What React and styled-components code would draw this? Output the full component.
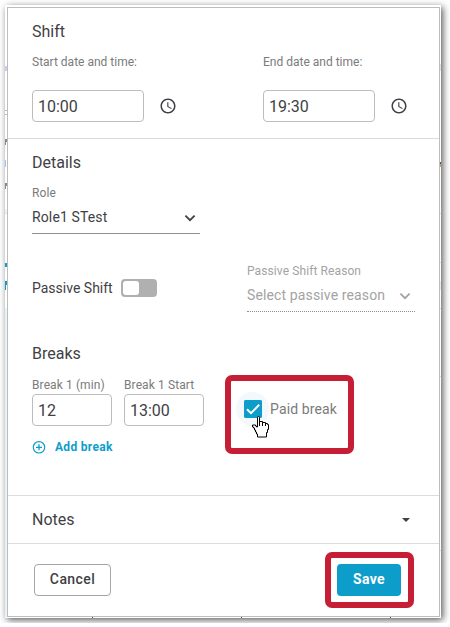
import { useState } from 'react';
import styled, { createGlobalStyle, css } from 'styled-components';

const COLORS = {
  Text: '#3f3f46',
  Label: '#7b7b7b',
  Muted: '#a3a3a3',
  Border: '#bdbdbd',
  Divider: '#dcdcdc',
  Primary: '#0d9dcb',
  Highlight: '#c61f35',
};

// slivers of the schedule that show on both sides of the dialog
const LEFT_MARKS = [
  { top: 61, height: 5, color: '#c9cdf3' },
  { top: 105, height: 1, color: '#bdbdb5' },
  { top: 109, height: 1, color: '#bdbdb5' },
  { top: 134, height: 6, color: '#8f8580', dotted: true },
  { top: 155, height: 7, color: '#9cc8f7', narrow: true },
  { top: 178, height: 6, color: '#8f8580', dotted: true },
  { top: 204, height: 4, color: '#f1f1f1' },
  { top: 208, height: 1, color: '#e4e4e4' },
  { top: 258, height: 4, color: COLORS.Primary },
  { top: 276, height: 9, color: COLORS.Primary, dotted: true },
  { top: 303, height: 310, color: '#e6f3f8' },
];

const RIGHT_MARKS = [
  { top: 59, height: 7, color: '#d3e6f2' },
  { top: 157, height: 2, color: '#55556a' },
  { top: 159, height: 3, color: '#d8a052' },
  { top: 208, height: 1, color: '#dddddd' },
  { top: 257, height: 1, color: '#dddddd' },
  { top: 276, height: 9, color: '#e3ecf2' },
  { top: 303, height: 1, color: '#dddddd' },
  { top: 371, height: 1, color: '#dddddd' },
  { top: 545, height: 1, color: '#dddddd' },
];

function ClockIcon() {
  return (
    <svg width="18" height="18" viewBox="0 0 24 24" fill="currentColor">
      <path d="M11.99 2C6.47 2 2 6.48 2 12s4.47 10 9.99 10C17.52 22 22 17.52 22 12S17.52 2 11.99 2zM12 20c-4.42 0-8-3.58-8-8s3.58-8 8-8 8 3.58 8 8-3.58 8-8 8zm.5-13H11v6l5.25 3.15.75-1.23-4.5-2.67z" />
    </svg>
  );
}

function ChevronIcon() {
  return (
    <svg width="20" height="20" viewBox="0 0 20 20" fill="none">
      <path d="M5.4 8.600l4.600 4.600L14.600 8.600" stroke="currentColor" strokeWidth="1.8" />
    </svg>
  );
}

function PlusCircleIcon() {
  return (
    <svg width="14" height="14" viewBox="0 0 14 14" fill="none" stroke="currentColor">
      <circle cx="7" cy="7.3" r="5.7" strokeWidth="1.2" />
      <path d="M7 4.3v6M4 7.3h6" strokeWidth="1.3" />
    </svg>
  );
}

function HandCursor() {
  return (
    <Cursor width="18" height="23" viewBox="0 0 18 23">
      <path
        d="M5.5 1.5q0-1 1-1t1 1v4h3v1h3v1h2v1h1v5h-1v3h-1v4.500H5.500v-3h-1v-2h-1v-2h-1v-2h-1v-1h-1v-2h3v1h1v1h1z"
        fill="#fff"
        stroke="#000"
      />
      <path d="M7.5 5v5M10.5 6v4M13.5 7v3" stroke="#000" fill="none" />
    </Cursor>
  );
}

function TimeField({ label, value }) {
  return (
    <div>
      <Label>{label}</Label>
      <TimeRow>
        <Input $width={112} defaultValue={value} />
        <ClockIcon />
      </TimeRow>
    </div>
  );
}

function SelectField({ label, value, disabled }) {
  return (
    <Select>
      <Label $muted={disabled} $spacing={0.1}>
        {label}
      </Label>
      <SelectValue $disabled={disabled}>
        <span>{value}</span>
        <ChevronIcon />
      </SelectValue>
    </Select>
  );
}

function App() {
  const [paid, setPaid] = useState(true);

  return (
    <Backdrop>
      <GlobalStyle />
      {LEFT_MARKS.map((mark, i) => (
        <Mark key={i} $side="left" {...markProps(mark)} />
      ))}
      {RIGHT_MARKS.map((mark, i) => (
        <Mark key={i} $side="right" {...markProps(mark)} />
      ))}
      <Tick $left={87} />
      <Tick $left={236} />
      <Tick $left={385} />

      <Dialog>
        <ShiftSection>
          <Heading>Shift</Heading>
          <TimeFields>
            <TimeField label="Start date and time:" value="10:00" />
            <TimeField label="End date and time:" value="19:30" />
          </TimeFields>
        </ShiftSection>

        <DetailsSection>
          <Heading>Details</Heading>
          <RoleRow>
            <SelectField label="Role" value="Role1 STest" />
          </RoleRow>

          <PassiveRow>
            <ToggleLabel>
              Passive Shift
              <Toggle />
            </ToggleLabel>
            <SelectField label="Passive Shift Reason" value="Select passive reason" disabled />
          </PassiveRow>

          <Heading>Breaks</Heading>
          <BreakRow>
            <BreakField>
              <Label $spacing={0.1}>Break 1 (min)</Label>
              <Input $width={80} defaultValue="12" />
            </BreakField>
            <BreakField>
              <Label $spacing={0.1}>Break 1 Start</Label>
              <Input $width={80} defaultValue="13:00" />
            </BreakField>
            <PaidBreak>
              <Checkbox $checked={paid} onClick={() => setPaid(!paid)}>
                {paid && (
                  <svg width="18" height="18" viewBox="0 0 18 18" fill="none">
                    <path d="M3 9.200l4 4L15.200 4.800" stroke="#fff" strokeWidth="2" />
                  </svg>
                )}
                <HandCursor />
              </Checkbox>
              Paid break
              <PaidHighlight />
            </PaidBreak>
          </BreakRow>
          <AddBreak>
            <PlusCircleIcon />
            Add break
          </AddBreak>
        </DetailsSection>

        <NotesSection>
          <Heading>Notes</Heading>
          <Caret />
        </NotesSection>

        <Footer>
          <CancelButton>Cancel</CancelButton>
          <SaveButton>
            Save
            <SaveHighlight />
          </SaveButton>
        </Footer>
      </Dialog>
    </Backdrop>
  );
}

const markProps = (mark) => ({
  $top: mark.top,
  $height: mark.height,
  $color: mark.color,
  $narrow: mark.narrow,
  $dotted: mark.dotted,
});

const GlobalStyle = createGlobalStyle`
  *, *::before, *::after {
    box-sizing: border-box;
  }

  body {
    margin: 0;
    background: #fff;
    font-family: Roboto, "Liberation Sans", sans-serif;
    color: ${COLORS.Text};
    overflow: hidden;
  }

  button, input {
    font: inherit;
    color: inherit;
  }

  svg {
    display: block;
    flex-shrink: 0;
  }
`;

const Backdrop = styled.div`
  position: relative;
  width: 436px;
  height: 613px;
  margin: 5px;
  padding: 2px 1px 1px 2px;
  background: #fff;
  box-shadow: 2px 2px 7px rgba(0, 0, 0, 0.65);
`;

const Mark = styled.span`
  position: absolute;
  ${({ $side }) => $side}: 0;
  top: ${({ $top }) => $top}px;
  width: ${({ $narrow, $side }) => ($narrow || $side === 'right' ? 1 : 2)}px;
  height: ${({ $height }) => $height}px;
  background: ${({ $color }) => $color};

  ${({ $dotted, $color }) =>
    $dotted &&
    css`
      background: linear-gradient(to bottom right, ${$color} 60%, #fff 60%);
    `}
`;

const Tick = styled.span`
  position: absolute;
  left: ${({ $left }) => $left}px;
  bottom: 0;
  width: 1px;
  height: 1px;
  background: #555;
`;

const Dialog = styled.div`
  position: relative;
  width: 433px;
  height: 610px;
  display: flex;
  flex-direction: column;
  background: #fff;
  border: 1px solid ${COLORS.Border};
`;

const ShiftSection = styled.section`
  height: 131px;
  padding: 14px 24px 0;
  border-bottom: 1px solid ${COLORS.Divider};
`;

const DetailsSection = styled.section`
  height: 357px;
  padding: 14px 24px 0;
  border-bottom: 1px solid ${COLORS.Divider};
`;

const Heading = styled.h2`
  margin: 0;
  font-size: 16px;
  font-weight: 400;
  line-height: 20px;
`;

const Label = styled.label`
  display: block;
  font-size: 12px;
  line-height: 16px;
  letter-spacing: ${({ $spacing = 0 }) => $spacing}px;
  color: ${({ $muted }) => ($muted ? COLORS.Muted : COLORS.Label)};
`;

const Input = styled.input`
  display: block;
  width: ${({ $width }) => $width}px;
  height: 32px;
  padding: 0 5px;
  border: 1px solid ${COLORS.Border};
  border-radius: 4px;
  background: #fff;
  font-size: 16px;
  outline: none;
`;

const TimeFields = styled.div`
  display: flex;
  gap: 86px;
  padding-top: 12px;
`;

const TimeRow = styled.div`
  display: flex;
  align-items: center;
  gap: 15px;
  padding-top: 20px;
`;

const RoleRow = styled.div`
  padding-top: 12px;
`;

const Select = styled.div`
  width: 168px;
`;

const SelectValue = styled.div`
  display: flex;
  align-items: center;
  justify-content: space-between;
  height: 33px;
  padding-bottom: 1px;
  font-size: 14px;
  letter-spacing: 0.13px;
  color: ${({ $disabled }) => ($disabled ? COLORS.Muted : COLORS.Text)};
  border-bottom: 1px ${({ $disabled }) => ($disabled ? 'dotted' : 'solid')} #8e8e8e;
`;

const PassiveRow = styled.div`
  display: flex;
  justify-content: space-between;
  padding: 29px 0 32px;
`;

const ToggleLabel = styled.div`
  display: flex;
  align-items: center;
  gap: 8px;
  height: 18px;
  margin-top: 16px;
  font-size: 14px;
`;

const Toggle = styled.span`
  width: 36px;
  height: 18px;
  padding: 2px;
  border-radius: 4px;
  background: #b0b0b0;

  &::before {
    content: '';
    display: block;
    width: 16px;
    height: 14px;
    border-radius: 3px;
    background: #fff;
  }
`;

const BreakRow = styled.div`
  display: flex;
  gap: 12px;
  padding-top: 13px;
`;

const BreakField = styled.div`
  display: flex;
  flex-direction: column;
  gap: 1px;
`;

const PaidBreak = styled.div`
  position: relative;
  z-index: 0;
  display: flex;
  align-items: center;
  gap: 8px;
  height: 18px;
  margin: 23px 0 0 28px;
  font-size: 14px;
  letter-spacing: 0.13px;
  color: ${COLORS.Label};
`;

const Checkbox = styled.span`
  position: relative;
  width: 18px;
  height: 18px;
  border-radius: 2px;
  background: ${({ $checked }) => ($checked ? COLORS.Primary : '#fff')};
  box-shadow: inset 0 0 0 1px ${COLORS.Primary};

  &::before {
    content: '';
    position: absolute;
    z-index: -1;
    inset: -8px -7px -8px -8px;
    border-radius: 50%;
    background: #f3f8fc;
  }
`;

const Cursor = styled.svg`
  position: absolute;
  z-index: 1;
  left: 8px;
  top: 16px;
`;

const highlightFrame = css`
  position: absolute;
  border: 6px solid ${COLORS.Highlight};
  border-radius: 7px;
  pointer-events: none;
`;

const PaidHighlight = styled.span`
  ${highlightFrame}
  left: -19px;
  top: -25px;
  width: 129px;
  height: 79px;
`;

const AddBreak = styled.button`
  display: flex;
  align-items: center;
  gap: 9px;
  height: 16px;
  margin-top: 13px;
  padding: 0;
  border: none;
  background: none;
  color: ${COLORS.Primary};
  font-size: 12px;
  font-weight: 700;
  letter-spacing: 0.3px;
`;

const NotesSection = styled.section`
  display: flex;
  align-items: center;
  justify-content: space-between;
  height: 48px;
  padding: 0 29px 0 24px;
  border-bottom: 1px solid ${COLORS.Divider};
`;

const Caret = styled.span`
  border: 4px solid transparent;
  border-top-color: ${COLORS.Text};
  border-bottom: none;
`;

const Footer = styled.footer`
  display: flex;
  justify-content: space-between;
  padding: 20px 38px 0 26px;
`;

const Button = styled.button`
  position: relative;
  height: 32px;
  padding: 0 0 2px;
  border-radius: 4px;
  font-size: 14px;
  letter-spacing: 0.4px;
`;

const CancelButton = styled(Button)`
  width: 77px;
  border: 1px solid #a6a6a6;
  background: #fff;
  font-weight: 500;
`;

const SaveButton = styled(Button)`
  width: 64px;
  border: none;
  background: ${COLORS.Primary};
  color: #fff;
  font-weight: 700;
`;

const SaveHighlight = styled.span`
  ${highlightFrame}
  inset: -12px -13px -12px -12px;
`;

export default App;
